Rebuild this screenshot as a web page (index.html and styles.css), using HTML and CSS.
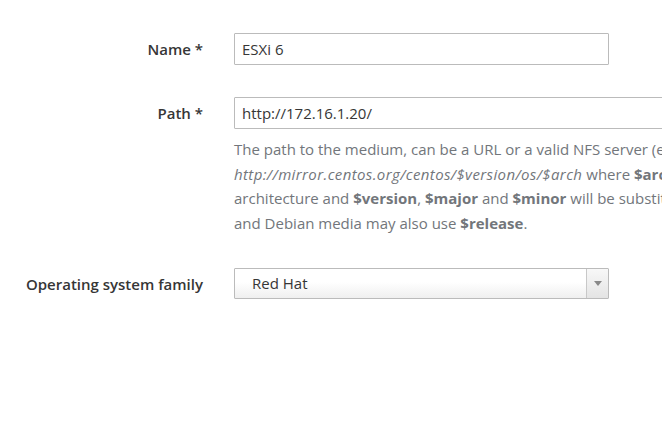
FILE: index.html
```html
<!DOCTYPE html>
<html>
<head>
<meta charset="utf-8">
<link rel="stylesheet" href="styles.css">
</head>
<body>
<form class="form">
  <div class="row">
    <label class="label">Name *</label>
    <div class="field"><div class="input short">ESXi 6</div></div>
  </div>
  <div class="row">
    <label class="label">Path *</label>
    <div class="field">
      <div class="input wide">http://172.16.1.20/</div>
      <p class="help">The path to the medium, can be a URL or a valid NFS server (exclusive of the architecture). for example<br><i>http://mirror.centos.org/centos/$version/os/$arch</i> where <b>$arch</b> will be substituted for the host's actual OS<br>architecture and <b>$version</b>, <b>$major</b> and <b>$minor</b> will be substituted for the version of the operating system. Solaris<br>and Debian media may also use <b>$release</b>.</p>
    </div>
  </div>
  <div class="row">
    <label class="label">Operating system family</label>
    <div class="field">
      <div class="select"><span class="select-text">Red Hat</span><span class="arrow"><span class="tri"></span></span></div>
    </div>
  </div>
</form>
</body>
</html>
```
FILE: styles.css
```css
html, body { margin: 0; padding: 0; background: #fff; overflow: hidden; }
body { font-family: "Open Sans", "Liberation Sans", sans-serif; font-size: 15px; color: #363636; width: 662px; height: 424px; }
.form { padding-top: 33px; }
.row { display: grid; grid-template-columns: 203px 900px; column-gap: 31px; margin-bottom: 32px; }
.label { text-align: right; font-weight: 600; line-height: 32px; color: #363636; }
.input { box-sizing: border-box; height: 32px; border: 1px solid #bbb; border-radius: 1px; padding: 0 8px 0 7px; line-height: 30px; color: #363636; background: #fff; }
.short { width: 375px; }
.wide { width: 700px; }
.help { margin: 8px 0 1px 0; white-space: nowrap; color: #72767b; line-height: 24.5px; }
.help i { font-style: italic; letter-spacing: 0.38px; }
.help b { font-weight: 700; }
.select { box-sizing: border-box; width: 375px; height: 31px; border: 1px solid #bbb; border-radius: 1px; display: flex; background: linear-gradient(#fff 0%, #fff 45%, #efefef 100%); }
.select-text { flex: 1; padding-left: 17px; line-height: 29px; color: #363636; }
.arrow { width: 21px; border-left: 1px solid #c8c8c8; display: flex; align-items: center; justify-content: center; background: linear-gradient(#f8f8f8, #e4e4e4); }
.tri { width: 0; height: 0; border-left: 4px solid transparent; border-right: 4px solid transparent; border-top: 5px solid #888; margin-top: -1px; }
```
